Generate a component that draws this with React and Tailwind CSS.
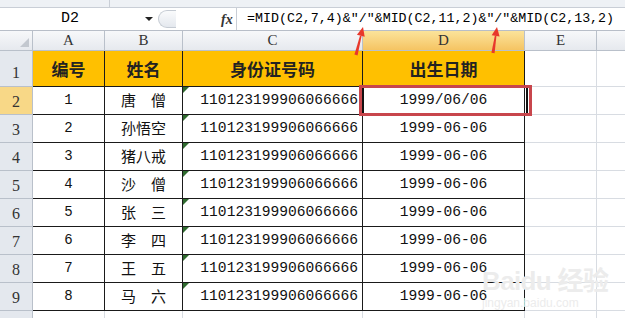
import React from "react";

const rows = [
  ["1", "唐\u3000僧", "110123199906066666", "1999/06/06"],
  ["2", "孙悟空", "110123199906066666", "1999-06-06"],
  ["3", "猪八戒", "110123199906066666", "1999-06-06"],
  ["4", "沙\u3000僧", "110123199906066666", "1999-06-06"],
  ["5", "张\u3000三", "110123199906066666", "1999-06-06"],
  ["6", "李\u3000四", "110123199906066666", "1999-06-06"],
  ["7", "王\u3000五", "110123199906066666", "1999-06-06"],
  ["8", "马\u3000六", "110123199906066666", "1999-06-06"],
];

const mono = { fontFamily: '"Liberation Mono", "Noto Sans CJK SC", monospace' };
const ser = { fontFamily: '"Liberation Serif", "Noto Sans CJK SC", serif' };

function Tri() {
  return (
    <div className="absolute left-0 top-0 w-0 h-0 border-t-[6px] border-t-[#2f6b2f] border-r-[6px] border-r-transparent" />
  );
}

function Arrow({ x1, y1, x2, y2 }) {
  const ang = Math.atan2(y2 - y1, x2 - x1);
  const len = 9, w = 4;
  const bx = x2 - len * Math.cos(ang), by = y2 - len * Math.sin(ang);
  const px = -Math.sin(ang) * w, py = Math.cos(ang) * w;
  const tw = 1.6;
  const tpx = -Math.sin(ang) * tw, tpy = Math.cos(ang) * tw;
  return (
    <g>
      <polygon points={`${x1 + tpx},${y1 + tpy} ${x1 - tpx},${y1 - tpy} ${bx - px * 0.2},${by - py * 0.2} ${bx + px * 0.2},${by + py * 0.2}`} fill="#e8382c" />
      <polygon points={`${x2},${y2} ${bx + px},${by + py} ${bx - px},${by - py}`} fill="#e8382c" />
    </g>
  );
}

export default function App() {
  return (
    <div className="relative w-[625px] h-[318px] overflow-hidden bg-white" style={ser}>
      {/* top strip */}
      <div className="h-[8px] bg-[#eef1f5] flex border-b border-[#c9ced6]">
        <div className="w-[110px] border-r border-[#c9ced6]" />
        <div className="flex-1" />
      </div>
      {/* formula bar */}
      <div className="h-[23px] flex items-center bg-white border-b border-[#b8bec8]">
        <div className="w-[140px] h-full flex items-center justify-center text-[15px] text-black" style={mono}>D2</div>
        <div className="w-[18px] flex items-center justify-center">
          <div className="w-0 h-0 border-l-[4px] border-l-transparent border-r-[4px] border-r-transparent border-t-[4px] border-t-[#222]" />
        </div>
        <div className="w-[18px] h-[18px] rounded-l-full border border-[#c5cbd3] border-r-0 bg-gradient-to-b from-[#fafbfc] to-[#e4e8ee]" />
        <div className="w-[45px]" />
        <div className="w-[15px] text-[14px] italic font-bold text-[#333]" style={{ fontFamily: '"Liberation Serif", serif' }}>fx</div>
        <div className="w-px h-full bg-[#c9ced6]" />
        <div className="pl-[10px] text-[13.3px] text-black whitespace-nowrap" style={mono}>=MID(C2,7,4)&amp;"/"&amp;MID(C2,11,2)&amp;"/"&amp;MID(C2,13,2)</div>
      </div>
      {/* column headers */}
      <div className="h-[20px] flex bg-gradient-to-b from-[#f7f8fa] to-[#e6e9ee] border-b border-[#b9c0ca] text-[15px] text-[#333]" style={ser}>
        <div className="w-[33px] relative border-r border-[#b9c0ca]">
          <div className="absolute right-[3px] bottom-[3px] w-0 h-0 border-b-[9px] border-b-[#c3c8cf] border-l-[9px] border-l-transparent" />
        </div>
        <div className="w-[72px] flex items-center justify-center border-r border-[#b9c0ca]">A</div>
        <div className="w-[78px] flex items-center justify-center border-r border-[#b9c0ca]">B</div>
        <div className="w-[180px] flex items-center justify-center border-r border-[#b9c0ca]">C</div>
        <div className="w-[162px] flex items-center justify-center border-r border-[#b9c0ca] bg-gradient-to-b from-[#fbe39a] to-[#f5c462]">D</div>
        <div className="w-[72px] flex items-center justify-center border-r border-[#b9c0ca]">E</div>
        <div className="flex-1" />
      </div>
      {/* row 1 */}
      <div className="h-[36px] flex">
        <div className="w-[33px] flex items-end justify-center pb-[1px] bg-[#e4e8ee] border-r border-b border-[#b9c0ca] text-[16px] text-[#333]" style={ser}>1</div>
        {[["编号", 72], ["姓名", 78], ["身份证号码", 180], ["出生日期", 162]].map(([t, w]) => (
          <div key={t} style={{ width: w, fontFamily: '"Noto Sans CJK SC", sans-serif' }} className="bg-[#ffc000] flex items-center justify-center border-r border-b border-[#1a1a1a] text-[17px] font-bold text-[#222]">{t}</div>
        ))}
        <div className="w-[72px] border-r border-b border-[#d8dce2]" />
        <div className="flex-1 border-b border-[#d8dce2]" />
      </div>
      {rows.map((r, i) => (
        <div key={i} className="h-[28px] flex">
          <div className={`w-[33px] flex items-end justify-center pb-0 border-r border-b border-[#b9c0ca] text-[16px] text-[#333] ${i === 0 ? "bg-[#f8d887]" : "bg-[#e4e8ee]"}`} style={ser}>{i + 2}</div>
          <div className="w-[72px] flex items-center justify-center border-r border-b border-[#1a1a1a] text-[14px] text-[#111]" style={mono}>{r[0]}</div>
          <div className="w-[78px] flex items-center justify-center border-r border-b border-[#1a1a1a] text-[15px] text-[#111]" style={{ fontFamily: '"Noto Sans CJK SC", sans-serif' }}>{r[1]}</div>
          <div className="relative w-[180px] flex items-center justify-end pr-[4px] border-r border-b border-[#1a1a1a] text-[14.6px] text-[#111]" style={mono}>
            <Tri />
            {r[2]}
          </div>
          <div className="w-[162px] flex items-center justify-center border-r border-b border-[#1a1a1a] text-[14.6px] text-[#111]" style={mono}>{r[3]}</div>
          <div className="w-[72px] border-r border-b border-[#d8dce2]" />
          <div className="flex-1 border-b border-[#d8dce2]" />
        </div>
      ))}
      <div className="h-[28px] flex">
        <div className="w-[33px] bg-[#e4e8ee] border-r border-[#b9c0ca]" />
        <div className="w-[72px] border-r border-[#d8dce2]" />
        <div className="w-[78px] border-r border-[#d8dce2]" />
        <div className="w-[180px] border-r border-[#d8dce2]" />
        <div className="w-[162px] border-r border-[#d8dce2]" />
        <div className="w-[72px] border-r border-[#d8dce2]" />
      </div>

      {/* selection */}
      <div className="absolute left-[362px] top-[86px] w-[166px] h-[30px] border-2 border-[#111]" />
      <div className="absolute left-[359px] top-[85px] w-[173px] h-[31px] border-[3px] border-[#c8464c]" />

      {/* watermark */}
      <div className="absolute left-[482px] top-[262px] text-[26px] font-bold text-[#ececec] tracking-tight" style={{ fontFamily: '"Liberation Sans", "Noto Sans CJK SC", sans-serif' }}>Bai<span>du</span> 经验</div>
      <div className="absolute left-[482px] top-[294px] text-[12px] text-[#ececec]" style={{ fontFamily: '"Liberation Sans", sans-serif' }}>jingyan.baidu.com</div>

      {/* arrows */}
      <svg className="absolute left-0 top-0 pointer-events-none" width="625" height="318">
        <Arrow x1={356} y1={55} x2={363} y2={27} />
        <Arrow x1={493} y1={53} x2={497} y2={27} />
      </svg>
    </div>
  );
}
